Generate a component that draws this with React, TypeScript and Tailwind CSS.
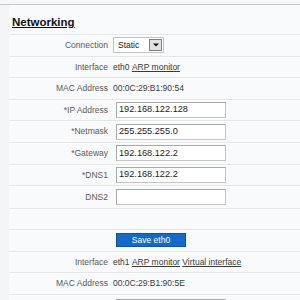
import React from "react";

const Row = ({ label, children, h = "h-[21.6px]" }: { label?: string; children?: React.ReactNode; h?: string }) => (
  <div className={`flex items-center ${h} border-b border-[#e3e5e7] bg-[#f9fafb] shadow-[inset_0_1px_0_#ffffff]`}>
    <div className="w-[99px] shrink-0 text-right text-[#5a5a5a] pr-0">{label}</div>
    <div className="pl-[5px] flex items-center text-[#3a3a3a] whitespace-nowrap">{children}</div>
  </div>
);

const Input = ({ value }: { value: string }) => (
  <div className="ml-[3px] w-[110px] h-[16px] bg-white border border-[#c4c4c4] border-t-[#a9a9a9] border-l-[#a9a9a9] flex items-center pl-[2px] text-[#222] text-[9.2px]">
    {value}
  </div>
);

export default function App() {
  return (
    <div
      className="w-[300px] h-[300px] overflow-hidden bg-[#f3f5f7] text-[8.5px] leading-none"
      style={{ fontFamily: '"Liberation Sans", Arial, sans-serif' }}
    >
      <div className="h-[4px] bg-[#f6f7f8]" />
      <div className="h-px bg-[#c6c6c6]" />
      <div className="ml-[9px]">
        <div className="h-[30px] bg-[#f9fafb] border-b border-[#e3e5e7] pl-[3px] pt-[12px]">
          <span className="text-[11.5px] font-bold text-[#111] underline underline-offset-[1px]">Networking</span>
        </div>
        <Row label="Connection">
          <div className="w-[51px] h-[16px] bg-white border border-[#c2c2c2] flex items-center justify-between pl-[4px] pr-[1px] text-[#222]">
            <span>Static</span>
            <span className="w-[13px] h-[12px] bg-[#e2e2e2] border border-[#7d7d7d] flex items-center justify-center">
              <svg width="6" height="4" viewBox="0 0 6 4"><path d="M0 0.5 H6 L3 3.5 Z" fill="#111" /></svg>
            </span>
          </div>
        </Row>
        <Row label="Interface">
          eth0&nbsp;<span className="underline">ARP monitor</span>
        </Row>
        <Row label="MAC Address">00:0C:29:B1:90:54</Row>
        <Row label="*IP Address"><Input value="192.168.122.128" /></Row>
        <Row label="*Netmask"><Input value="255.255.255.0" /></Row>
        <Row label="*Gateway"><Input value="192.168.122.2" /></Row>
        <Row label="*DNS1"><Input value="192.168.122.2" /></Row>
        <Row label="DNS2" h="h-[22.4px]"><Input value="" /></Row>
        <Row />
        <Row>
          <div className="ml-[3px] w-[70px] h-[14px] bg-[#1569c7] border border-[#0e559f] text-white flex items-center justify-center">
            Save eth0
          </div>
        </Row>
        <Row label="Interface">
          eth1&nbsp;<span className="underline">ARP monitor</span>&nbsp;<span className="underline">Virtual interface</span>
        </Row>
        <Row label="MAC Address">00:0C:29:B1:90:5E</Row>
        <Row label=""><div className="mt-[4px]"><Input value="" /></div></Row>
      </div>
    </div>
  );
}
